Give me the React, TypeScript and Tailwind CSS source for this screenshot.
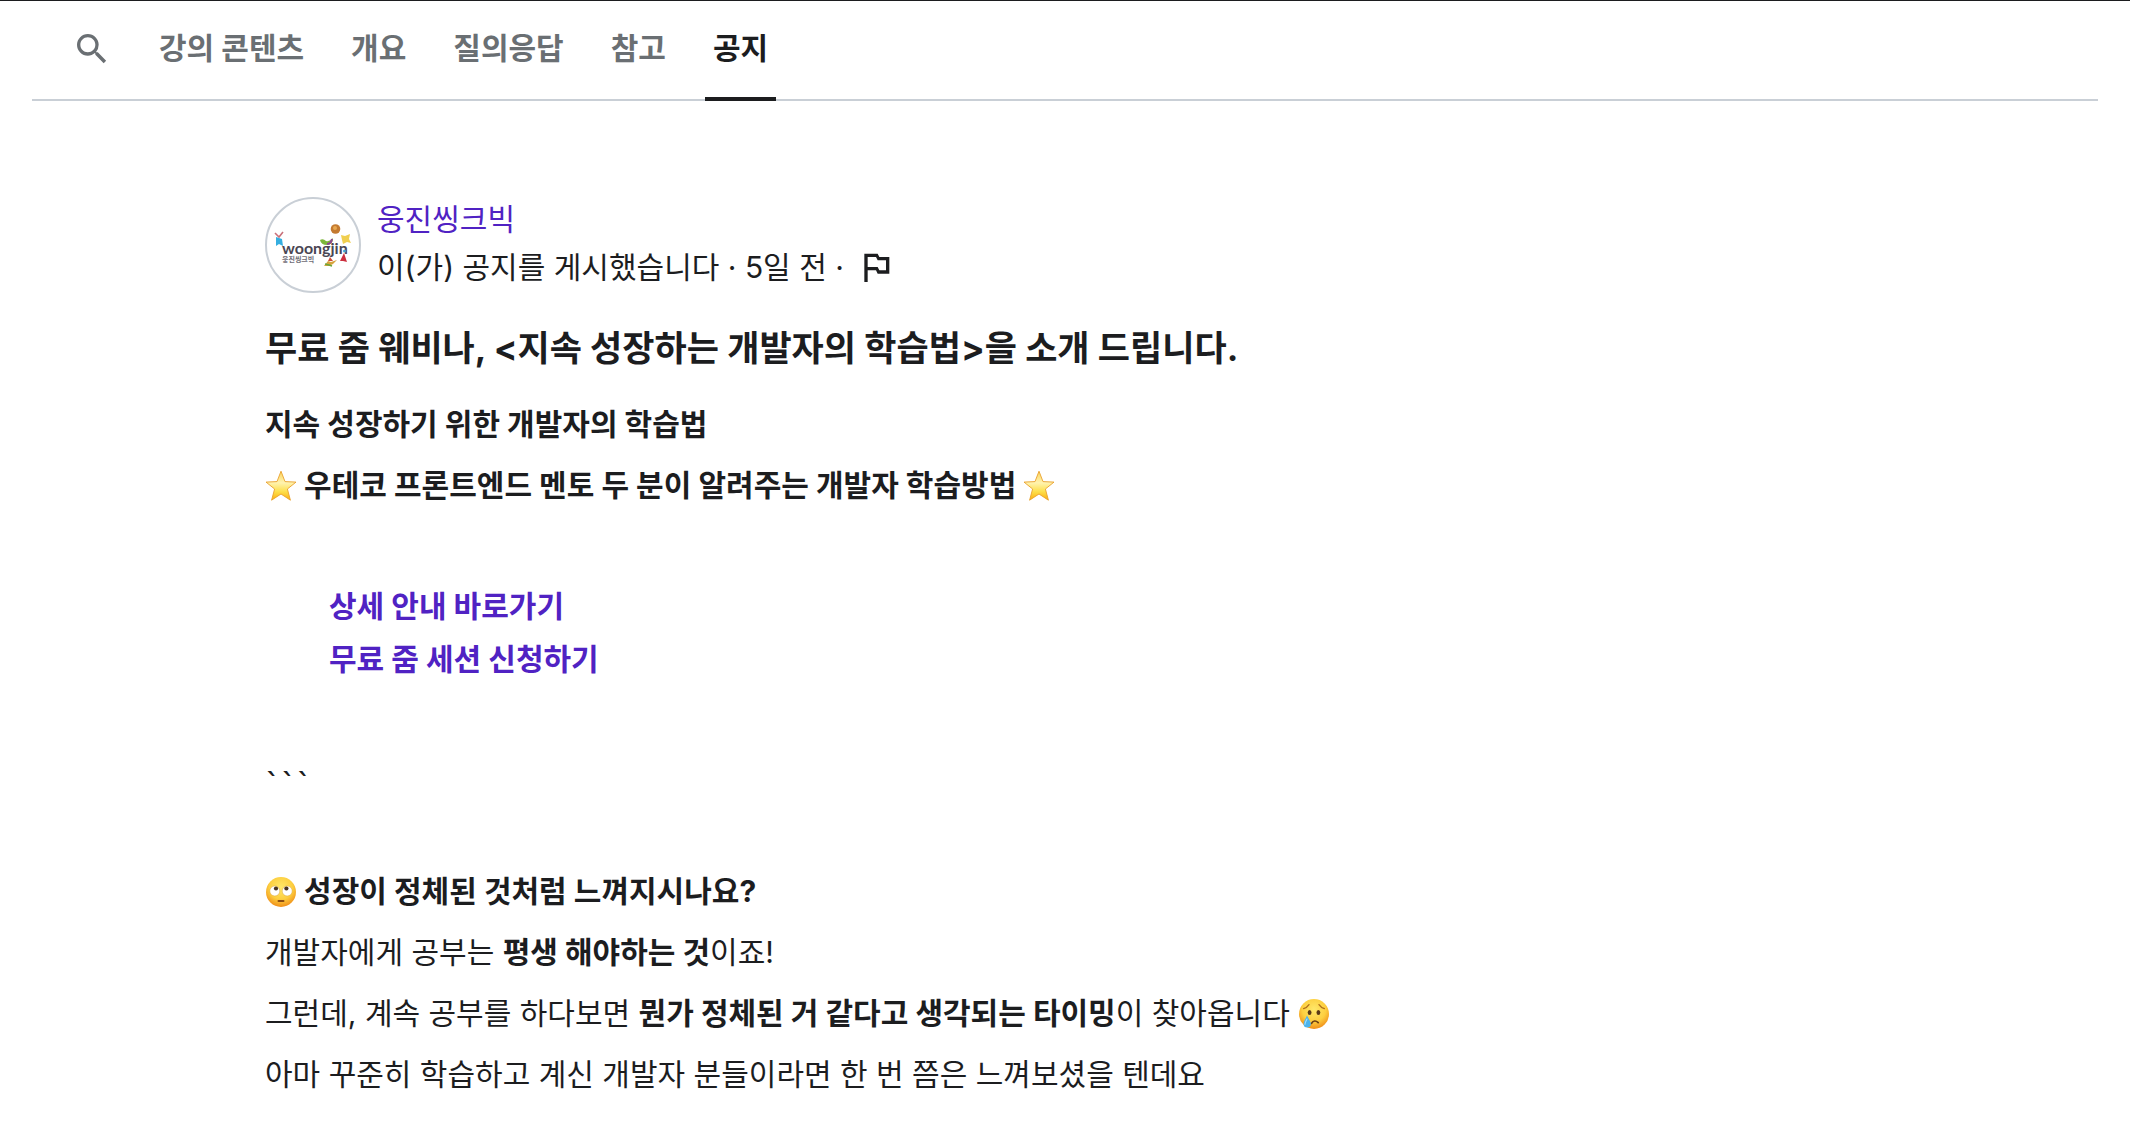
import React, { useState } from 'react';

interface IconProps {
  className?: string;
}

const SearchIcon: React.FC<IconProps> = ({ className }) => (
  <svg viewBox="0 0 24 24" fill="currentColor" className={className} aria-hidden="true">
    <path d="M15.5 14h-.79l-.28-.27A6.47 6.47 0 0 0 16 9.5 6.5 6.5 0 1 0 9.5 16c1.61 0 3.09-.59 4.23-1.57l.27.28v.79l5 4.99L20.49 19l-4.99-5zm-6 0C7.01 14 5 11.99 5 9.5S7.01 5 9.5 5 14 7.01 14 9.5 11.99 14 9.5 14z" />
  </svg>
);

const FlagIcon: React.FC<IconProps> = ({ className }) => (
  <svg viewBox="0 0 24 24" fill="currentColor" className={className} aria-hidden="true">
    <path d="m14 6-1-2H5v17h2v-7h5l1 2h7V6h-6zm4 8h-4l-1-2H7V6h5l1 2h5v6z" />
  </svg>
);

const StarEmoji = () => (
  <svg viewBox="0 0 32 32" className="inline-block size-8 align-[-6px]" role="img" aria-label="별">
    <defs>
      <linearGradient id="star-fill" x1="0" y1="0" x2="0" y2="1">
        <stop offset="0" stopColor="#fbd55c" />
        <stop offset="0.4" stopColor="#fff3b0" />
        <stop offset="0.7" stopColor="#fddf4b" />
        <stop offset="1" stopColor="#fcae0c" />
      </linearGradient>
    </defs>
    <path
      d="M16 1.2 20 11.6 31 12.1 22.4 19 25.4 30.2 16 24 6.6 30.2 9.6 19 1 12.1 12 11.6z"
      fill="url(#star-fill)"
      stroke="#e9a02c"
      strokeWidth="0.9"
      strokeLinejoin="round"
    />
  </svg>
);

const FaceGradient: React.FC<{ id: string }> = ({ id }) => (
  <radialGradient id={id} cx="0.5" cy="0.35" r="0.65">
    <stop offset="0" stopColor="#ffe86a" />
    <stop offset="0.6" stopColor="#fdcf40" />
    <stop offset="1" stopColor="#f08e18" />
  </radialGradient>
);

const RollingEyesEmoji = () => (
  <svg viewBox="0 0 32 32" className="inline-block size-8 align-[-6px]" role="img" aria-label="눈 굴리는 얼굴">
    <defs>
      <FaceGradient id="rolling-fill" />
    </defs>
    <circle cx="16" cy="16" r="15" fill="url(#rolling-fill)" />
    <circle cx="9.8" cy="15" r="5" fill="#fff" stroke="#d9a441" strokeWidth="0.5" />
    <circle cx="22.2" cy="15" r="5" fill="#fff" stroke="#d9a441" strokeWidth="0.5" />
    <circle cx="11" cy="12.5" r="2.1" fill="#4a3420" />
    <circle cx="21.4" cy="12.5" r="2.1" fill="#4a3420" />
    <rect x="12.5" y="24" width="7" height="2" rx="1" fill="#8a4b12" />
  </svg>
);

const CryingEmoji = () => (
  <svg viewBox="0 0 32 32" className="inline-block size-8 align-[-6px]" role="img" aria-label="우는 얼굴">
    <defs>
      <FaceGradient id="crying-fill" />
    </defs>
    <circle cx="16" cy="16" r="15" fill="url(#crying-fill)" />
    <path d="M5.6 10.6Q9 9.6 11 6.6M26.4 10.6Q23 9.6 21 6.6" fill="none" stroke="#b06f1c" strokeWidth="1.3" strokeLinecap="round" />
    <ellipse cx="11.6" cy="14.5" rx="1.9" ry="2.6" fill="#5a3a17" />
    <ellipse cx="20.4" cy="14.5" rx="1.9" ry="2.6" fill="#5a3a17" />
    <path d="M13.4 25.4Q16.4 21 20.2 24.6" fill="none" stroke="#6b3e12" strokeWidth="1.7" strokeLinecap="round" />
    <path d="M9 17.5C7.6 21 5.6 23.4 5.6 26a3.6 3.6 0 0 0 7.2 0C12.8 23.4 10.6 21 9 17.5z" fill="#4bb4ee" />
    <path d="M9 21C8 23 7 24.4 7 26.2" fill="none" stroke="#a8e0fb" strokeWidth="1.1" strokeLinecap="round" />
  </svg>
);

const WoongjinLogo: React.FC<IconProps> = ({ className }) => (
  <svg viewBox="0 0 92 92" className={className} role="img" aria-label="웅진씽크빅">
    {/* figure on the left */}
    <path d="M8 34l4 4 4-5" fill="none" stroke="#c9707a" strokeWidth="1.6" />
    <path d="M9 38l6 2 1 7-4-2-3 2z" fill="#35aee0" />
    {/* sun and flower */}
    <circle cx="68.5" cy="30" r="4.8" fill="#c47a30" />
    <circle cx="68" cy="29" r="2" fill="#e8a850" />
    <path d="M74 36l4 1 5-2-1 5 2 4-4-1-4 2-1-4z" fill="#f0cf50" />
    {/* leaf over the word */}
    <path d="M53 41q3-2 6 1 4 1 7-3 0 7-6 7-6 0-7-5z" fill="#7cb63a" />
    <path d="M60 45q4 0 5-5" fill="none" stroke="#8d4591" strokeWidth="2" />
    <text x="15" y="55" fontSize="16" fontWeight="700" fill="#4a4653" fontFamily="Lato, sans-serif">
      woongjin
    </text>
    <text x="15" y="63" fontSize="7" fontWeight="700" fill="#6e6b75" fontFamily="'Noto Sans CJK KR', sans-serif">
      웅진씽크빅
    </text>
    {/* bird and red figure */}
    <path d="M57 67l4-5 3 1 6-2-4 4-4 2z" fill="#d7a43c" />
    <path d="M61 62l2-4 3 4z" fill="#cf4a35" />
    <path d="M58 65l4 1 3 1" fill="none" stroke="#6ba539" strokeWidth="1.4" />
    <circle cx="77.5" cy="52" r="1.5" fill="#43a9d1" />
    <path d="M77 54l3 9-4-1-3 0z" fill="#cc2f3e" />
  </svg>
);

const TABS = ['강의 콘텐츠', '개요', '질의응답', '참고', '공지'];

const App: React.FC = () => {
  const [activeTab, setActiveTab] = useState('공지');

  return (
    <div className="min-h-screen border-t border-[#1c1d1f] bg-white px-8 font-[Inter,'Noto_Sans_CJK_KR',sans-serif] text-[30px] text-[#1c1d1f]">
      <nav className="flex h-[100px] items-stretch gap-[31px] border-b-2 border-[#c9cfd6] pl-10">
        <button type="button" aria-label="검색" className="mr-2 mb-0.5 text-[#6a6f73]">
          <SearchIcon className="size-10" />
        </button>
        {TABS.map((tab) => (
          <button
            key={tab}
            type="button"
            onClick={() => setActiveTab(tab)}
            className={
              tab === activeTab
                ? '-mb-0.5 border-b-4 border-[#1c1d1f] px-2 pb-0.5 font-bold text-[#1c1d1f]'
                : '-mb-0.5 border-b-4 border-transparent px-2 pb-0.5 font-bold text-[#6a6f73]'
            }
          >
            {tab}
          </button>
        ))}
      </nav>

      <main className="mx-auto mt-24 max-w-[1600px]">
        <header className="flex items-start gap-4">
          <a href="#instructor" className="size-24 shrink-0 overflow-hidden rounded-full border-2 border-[#c9cfd6]">
            <WoongjinLogo className="size-full" />
          </a>
          <div className="-mt-0.5 leading-12">
            <a href="#instructor" className="block text-[#5022c3]">
              웅진씽크빅
            </a>
            <div className="flex items-center">
              <span>이(가) 공지를 게시했습니다 · 5일 전 ·</span>
              <button type="button" aria-label="신고" className="ml-3">
                <FlagIcon className="size-10" />
              </button>
            </div>
          </div>
        </header>

        <h1 className="mt-[31px] text-[35px] leading-12 font-bold">
          무료 줌 웨비나, &lt;지속 성장하는 개발자의 학습법&gt;을 소개 드립니다.
        </h1>

        <article className="mt-[30px] leading-[45px]">
          <p className="font-bold">지속 성장하기 위한 개발자의 학습법</p>
          <p className="mt-4 font-bold">
            <StarEmoji /> 우테코 프론트엔드 멘토 두 분이 알려주는 개발자 학습방법 <StarEmoji />
          </p>
          <ul className="mt-19 space-y-2 pl-16 font-bold text-[#5022c3]">
            <li>
              <a href="#detail">상세 안내 바로가기</a>
            </li>
            <li>
              <a href="#apply">무료 줌 세션 신청하기</a>
            </li>
          </ul>
          <p className="mt-20 font-['DejaVu_Sans_Mono',monospace] text-[26px] font-bold">```</p>
          <p className="mt-[62px] font-bold">
            <RollingEyesEmoji /> 성장이 정체된 것처럼 느껴지시나요?
          </p>
          <p className="mt-4">
            개발자에게 공부는 <strong>평생 해야하는 것</strong>이죠!
          </p>
          <p className="mt-4">
            그런데, 계속 공부를 하다보면 <strong>뭔가 정체된 거 같다고 생각되는 타이밍</strong>이 찾아옵니다 <CryingEmoji />
          </p>
          <p className="mt-4">아마 꾸준히 학습하고 계신 개발자 분들이라면 한 번 쯤은 느껴보셨을 텐데요</p>
        </article>
      </main>
    </div>
  );
};

export default App;
